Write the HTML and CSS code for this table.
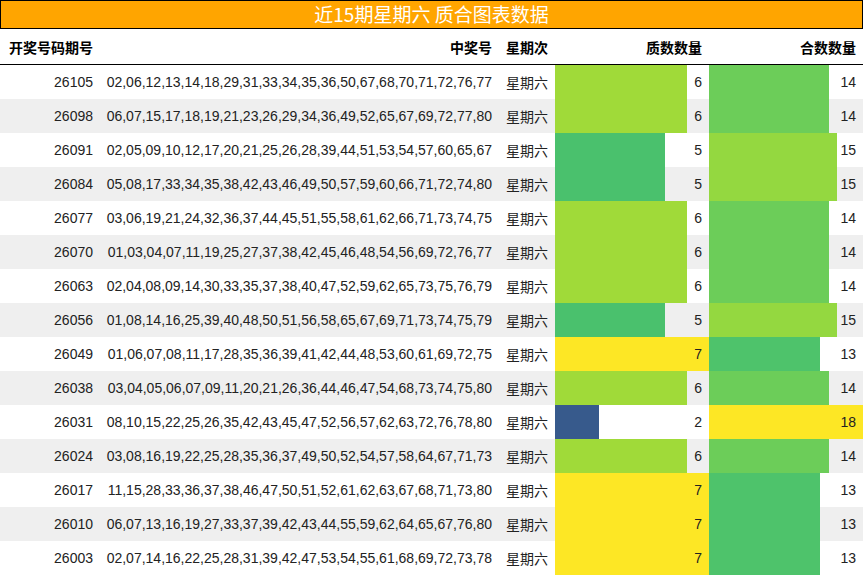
FILE: index.html
```html
<!DOCTYPE html>
<html lang="zh">
<head>
<meta charset="utf-8">
<title>近15期星期六 质合图表数据</title>
<link rel="stylesheet" href="styles.css">
</head>
<body>
<div class="chart">
  <div class="title">近15期星期六 质合图表数据</div>
  <div class="row head">
    <div class="c-issue">开奖号码期号</div>
    <div class="c-nums">中奖号</div>
    <div class="c-day">星期次</div>
    <div class="c-bar">质数数量</div>
    <div class="c-bar">合数数量</div>
  </div>
  <div class="row">
    <div class="c-issue">26105</div><div class="c-nums">02,06,12,13,14,18,29,31,33,34,35,36,50,67,68,70,71,72,76,77</div><div class="c-day">星期六</div>
    <div class="c-bar v6" style="--w:132px">6</div><div class="c-bar v14" style="--w:120px">14</div>
  </div>
  <div class="row">
    <div class="c-issue">26098</div><div class="c-nums">06,07,15,17,18,19,21,23,26,29,34,36,49,52,65,67,69,72,77,80</div><div class="c-day">星期六</div>
    <div class="c-bar v6" style="--w:132px">6</div><div class="c-bar v14" style="--w:120px">14</div>
  </div>
  <div class="row">
    <div class="c-issue">26091</div><div class="c-nums">02,05,09,10,12,17,20,21,25,26,28,39,44,51,53,54,57,60,65,67</div><div class="c-day">星期六</div>
    <div class="c-bar v5" style="--w:110px">5</div><div class="c-bar v15" style="--w:128px">15</div>
  </div>
  <div class="row">
    <div class="c-issue">26084</div><div class="c-nums">05,08,17,33,34,35,38,42,43,46,49,50,57,59,60,66,71,72,74,80</div><div class="c-day">星期六</div>
    <div class="c-bar v5" style="--w:110px">5</div><div class="c-bar v15" style="--w:128px">15</div>
  </div>
  <div class="row">
    <div class="c-issue">26077</div><div class="c-nums">03,06,19,21,24,32,36,37,44,45,51,55,58,61,62,66,71,73,74,75</div><div class="c-day">星期六</div>
    <div class="c-bar v6" style="--w:132px">6</div><div class="c-bar v14" style="--w:120px">14</div>
  </div>
  <div class="row">
    <div class="c-issue">26070</div><div class="c-nums">01,03,04,07,11,19,25,27,37,38,42,45,46,48,54,56,69,72,76,77</div><div class="c-day">星期六</div>
    <div class="c-bar v6" style="--w:132px">6</div><div class="c-bar v14" style="--w:120px">14</div>
  </div>
  <div class="row">
    <div class="c-issue">26063</div><div class="c-nums">02,04,08,09,14,30,33,35,37,38,40,47,52,59,62,65,73,75,76,79</div><div class="c-day">星期六</div>
    <div class="c-bar v6" style="--w:132px">6</div><div class="c-bar v14" style="--w:120px">14</div>
  </div>
  <div class="row">
    <div class="c-issue">26056</div><div class="c-nums">01,08,14,16,25,39,40,48,50,51,56,58,65,67,69,71,73,74,75,79</div><div class="c-day">星期六</div>
    <div class="c-bar v5" style="--w:110px">5</div><div class="c-bar v15" style="--w:128px">15</div>
  </div>
  <div class="row">
    <div class="c-issue">26049</div><div class="c-nums">01,06,07,08,11,17,28,35,36,39,41,42,44,48,53,60,61,69,72,75</div><div class="c-day">星期六</div>
    <div class="c-bar v7" style="--w:154px">7</div><div class="c-bar v13" style="--w:111px">13</div>
  </div>
  <div class="row">
    <div class="c-issue">26038</div><div class="c-nums">03,04,05,06,07,09,11,20,21,26,36,44,46,47,54,68,73,74,75,80</div><div class="c-day">星期六</div>
    <div class="c-bar v6" style="--w:132px">6</div><div class="c-bar v14" style="--w:120px">14</div>
  </div>
  <div class="row">
    <div class="c-issue">26031</div><div class="c-nums">08,10,15,22,25,26,35,42,43,45,47,52,56,57,62,63,72,76,78,80</div><div class="c-day">星期六</div>
    <div class="c-bar v2" style="--w:44px">2</div><div class="c-bar v18" style="--w:154px">18</div>
  </div>
  <div class="row">
    <div class="c-issue">26024</div><div class="c-nums">03,08,16,19,22,25,28,35,36,37,49,50,52,54,57,58,64,67,71,73</div><div class="c-day">星期六</div>
    <div class="c-bar v6" style="--w:132px">6</div><div class="c-bar v14" style="--w:120px">14</div>
  </div>
  <div class="row">
    <div class="c-issue">26017</div><div class="c-nums">11,15,28,33,36,37,38,46,47,50,51,52,61,62,63,67,68,71,73,80</div><div class="c-day">星期六</div>
    <div class="c-bar v7" style="--w:154px">7</div><div class="c-bar v13" style="--w:111px">13</div>
  </div>
  <div class="row">
    <div class="c-issue">26010</div><div class="c-nums">06,07,13,16,19,27,33,37,39,42,43,44,55,59,62,64,65,67,76,80</div><div class="c-day">星期六</div>
    <div class="c-bar v7" style="--w:154px">7</div><div class="c-bar v13" style="--w:111px">13</div>
  </div>
  <div class="row">
    <div class="c-issue">26003</div><div class="c-nums">02,07,14,16,22,25,28,31,39,42,47,53,54,55,61,68,69,72,73,78</div><div class="c-day">星期六</div>
    <div class="c-bar v7" style="--w:154px">7</div><div class="c-bar v13" style="--w:111px">13</div>
  </div>
</div>
</body>
</html>
```

FILE: styles.css
```css
html, body {
  margin: 0;
  padding: 0;
  background: #ffffff;
}

body {
  font-family: "Liberation Sans", "Noto Sans CJK SC", sans-serif;
  font-size: 14px;
  color: #222222;
}

.chart {
  width: 863px;
  display: flex;
  flex-direction: column;
}

.title {
  box-sizing: border-box;
  height: 29px;
  border: 1px solid #000000;
  background: #ffa500;
  color: #ffffff;
  font-family: "Noto Sans CJK SC", sans-serif;
  font-size: 19px;
  line-height: 26px;
  text-align: center;
}

.row {
  display: grid;
  grid-template-columns: 101px 399px 55px 154px 154px;
  height: 34px;
  align-items: stretch;
  background: #ffffff;
}

.row:nth-child(even) {
  background: #efefef;
}

.row > div {
  display: flex;
  align-items: center;
  white-space: nowrap;
  box-sizing: border-box;
}

.row.head {
  box-sizing: border-box;
  height: 36px;
  border-bottom: 1px solid #000000;
  font-family: "Noto Sans CJK SC", sans-serif;
  font-weight: bold;
  color: #000000;
  background: #ffffff;
}

.c-issue {
  justify-content: flex-end;
  padding-right: 8px;
}

.head .c-issue {
  justify-content: flex-start;
  padding-left: 9px;
}

.c-nums {
  justify-content: flex-end;
  padding-right: 8px;
}

.c-day {
  padding-left: 6px;
  font-family: "Noto Sans CJK SC", sans-serif;
}

.c-bar {
  justify-content: flex-end;
  padding-right: 7px;
  background-image: linear-gradient(to right, var(--c) var(--w), transparent var(--w));
  background-repeat: no-repeat;
}

.v2 { --c: #375a8c; }
.v5 { --c: #4ac16d; }
.v6 { --c: #a0da39; }
.v7 { --c: #fde725; }
.v13 { --c: #4ec36b; }
.v14 { --c: #6ccd59; }
.v15 { --c: #94d840; }
.v18 { --c: #fde725; }
```
